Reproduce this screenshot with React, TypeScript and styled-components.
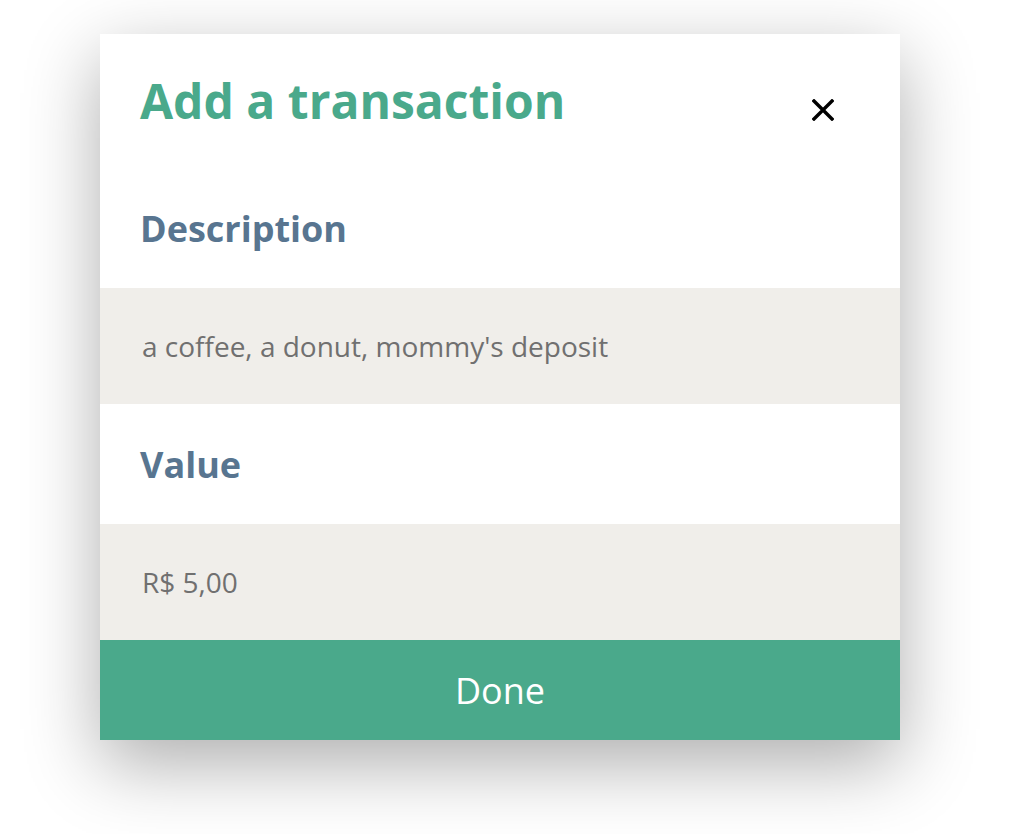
import React from "react";
import styled, { createGlobalStyle } from "styled-components";

const Global = createGlobalStyle`
  html, body { margin: 0; padding: 0; background: #ffffff; }
  body { font-family: "Open Sans", "Noto Sans", sans-serif; }
`;

const Page = styled.div`
  width: 1020px;
  height: 834px;
  padding: 34px 0 0 100px;
  box-sizing: border-box;
  overflow: hidden;
`;

const Card = styled.div`
  width: 800px;
  background: #ffffff;
  box-shadow: 0 24px 70px rgba(0, 0, 0, 0.32);
  display: flex;
  flex-direction: column;
`;

const Header = styled.div`
  height: 134px;
  display: flex;
  align-items: flex-start;
  justify-content: space-between;
  padding: 0 66px 0 40px;
`;

const Title = styled.h1`
  margin: 0;
  padding-top: 34px;
  font-size: 48px;
  line-height: 66px;
  font-weight: 700;
  color: #4aa98b;
`;

const Close = styled.button`
  margin-top: 65px;
  width: 22px;
  height: 22px;
  padding: 0;
  border: 0;
  background: transparent;
  display: flex;
  cursor: pointer;
`;

const Label = styled.label`
  height: 120px;
  box-sizing: border-box;
  padding: 36px 40px 0;
  font-size: 36px;
  line-height: 50px;
  font-weight: 700;
  color: #587590;
`;

const Field = styled.div`
  height: 116px;
  background: #f0eeea;
  display: flex;
  align-items: center;
  padding: 0 42px;
  font-size: 28px;
  color: #707070;
`;

const DoneButton = styled.button`
  height: 100px;
  border: 0;
  background: #4aa98b;
  color: #ffffff;
  font-family: "Open Sans", sans-serif;
  font-size: 36px;
  cursor: pointer;
`;

export default function App() {
  return (
    <Page>
      <Global />
      <Card>
        <Header>
          <Title>Add a transaction</Title>
          <Close aria-label="close">
            <svg width="22" height="22" viewBox="0 0 22 22">
              <path d="M2 2 L20 20 M20 2 L2 20" stroke="#000" strokeWidth="3.4" strokeLinecap="square" />
            </svg>
          </Close>
        </Header>
        <Label>Description</Label>
        <Field>a coffee, a donut, mommy's deposit</Field>
        <Label>Value</Label>
        <Field>R$ 5,00</Field>
        <DoneButton>Done</DoneButton>
      </Card>
    </Page>
  );
}
